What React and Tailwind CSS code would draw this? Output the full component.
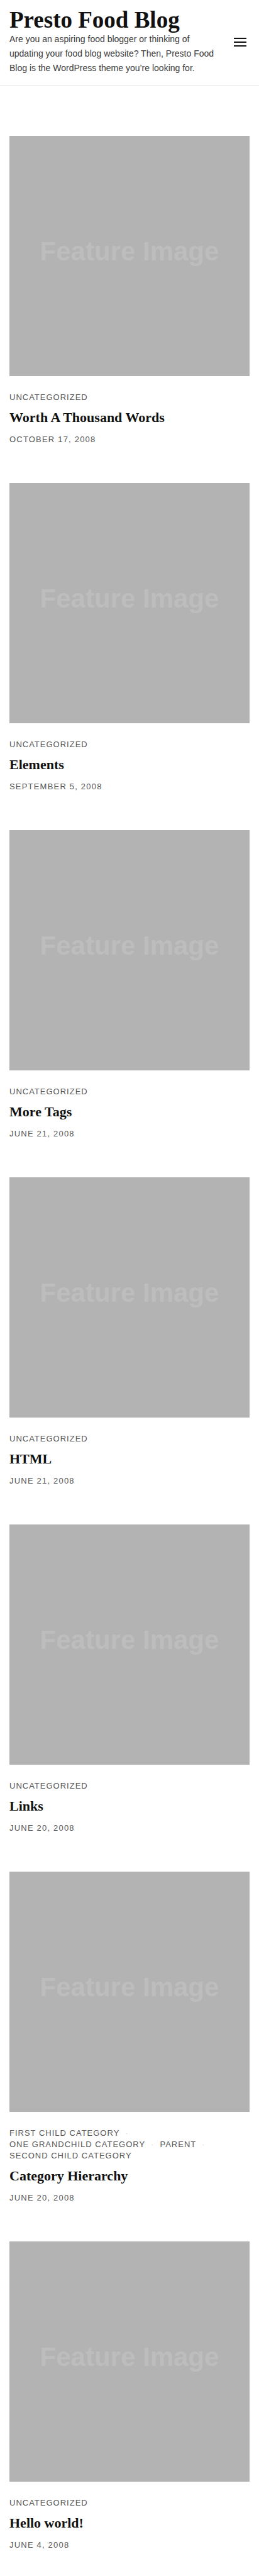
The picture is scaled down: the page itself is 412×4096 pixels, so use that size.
import React from "react";

const posts = [
  { title: "Worth A Thousand Words", date: "October 17, 2008", cats: ["Uncategorized"] },
  { title: "Elements", date: "September 5, 2008", cats: ["Uncategorized"] },
  { title: "More Tags", date: "June 21, 2008", cats: ["Uncategorized"] },
  { title: "HTML", date: "June 21, 2008", cats: ["Uncategorized"] },
  { title: "Links", date: "June 20, 2008", cats: ["Uncategorized"] },
  {
    title: "Category Hierarchy",
    date: "June 20, 2008",
    cats: ["First Child Category", "One Grandchild Category", "Parent", "Second Child Category"],
  },
  { title: "Hello world!", date: "June 4, 2008", cats: ["Uncategorized"] },
];

const sans = { fontFamily: '"Liberation Sans", Arial, sans-serif' };
const serif = { fontFamily: '"Liberation Serif", "Times New Roman", serif' };

const PostCard = ({ post }) => {
  return (
    <article className="mb-[60px]">
      {/* placeholder thumbnail */}
      <div className="h-[382px] w-full bg-[#b3b3b3] flex items-center justify-center pb-[14px]">
        <span className="text-[42px] leading-none font-bold text-[#bdbdbd]" style={sans}>
          Feature Image
        </span>
      </div>

      <div
        className="mt-[25px] flex flex-wrap text-[13px] leading-[18px] uppercase tracking-[1px] text-[#555]"
        style={sans}
      >
        {post.cats.map((cat, i) => (
          <span key={cat} className="whitespace-nowrap">
            {cat}
            {i < post.cats.length - 1 && <span className="mx-[9px] text-[#d4d4d4]">·</span>}
          </span>
        ))}
      </div>

      <h2 className="mt-[9px] text-[22px] leading-[28px] font-bold text-[#111]" style={serif}>
        {post.title}
      </h2>

      <p
        className="mt-[12px] text-[13px] leading-[18px] uppercase tracking-[1.2px] text-[#555]"
        style={sans}
      >
        {post.date}
      </p>
    </article>
  );
};

export default function App() {
  return (
    <div className="bg-white min-h-screen">
      {/* Header */}
      <header className="border-b border-[#e6e6e6] px-[15px] pt-[13px] pb-[15px] flex items-center justify-between gap-3">
        <div className="flex-1">
          <h1 className="text-[37px] leading-[38px] font-bold text-[#111]" style={serif}>
            Presto Food Blog
          </h1>
          <p className="text-[14px] leading-[23px] text-[#3a3a3a] pr-[10px]" style={sans}>
            Are you an aspiring food blogger or thinking of updating your food blog website? Then,
            Presto Food Blog is the WordPress theme you’re looking for.
          </p>
        </div>
        <button className="w-[20px] h-[14px] flex flex-col justify-between shrink-0 mr-[5px]">
          <span className="block h-[2px] w-full bg-[#111]" />
          <span className="block h-[2px] w-full bg-[#111]" />
          <span className="block h-[2px] w-full bg-[#111]" />
        </button>
      </header>

      <main className="px-[15px] pt-[80px]">
        {posts.map((post) => (
          <PostCard key={post.title} post={post} />
        ))}
      </main>
    </div>
  );
}
